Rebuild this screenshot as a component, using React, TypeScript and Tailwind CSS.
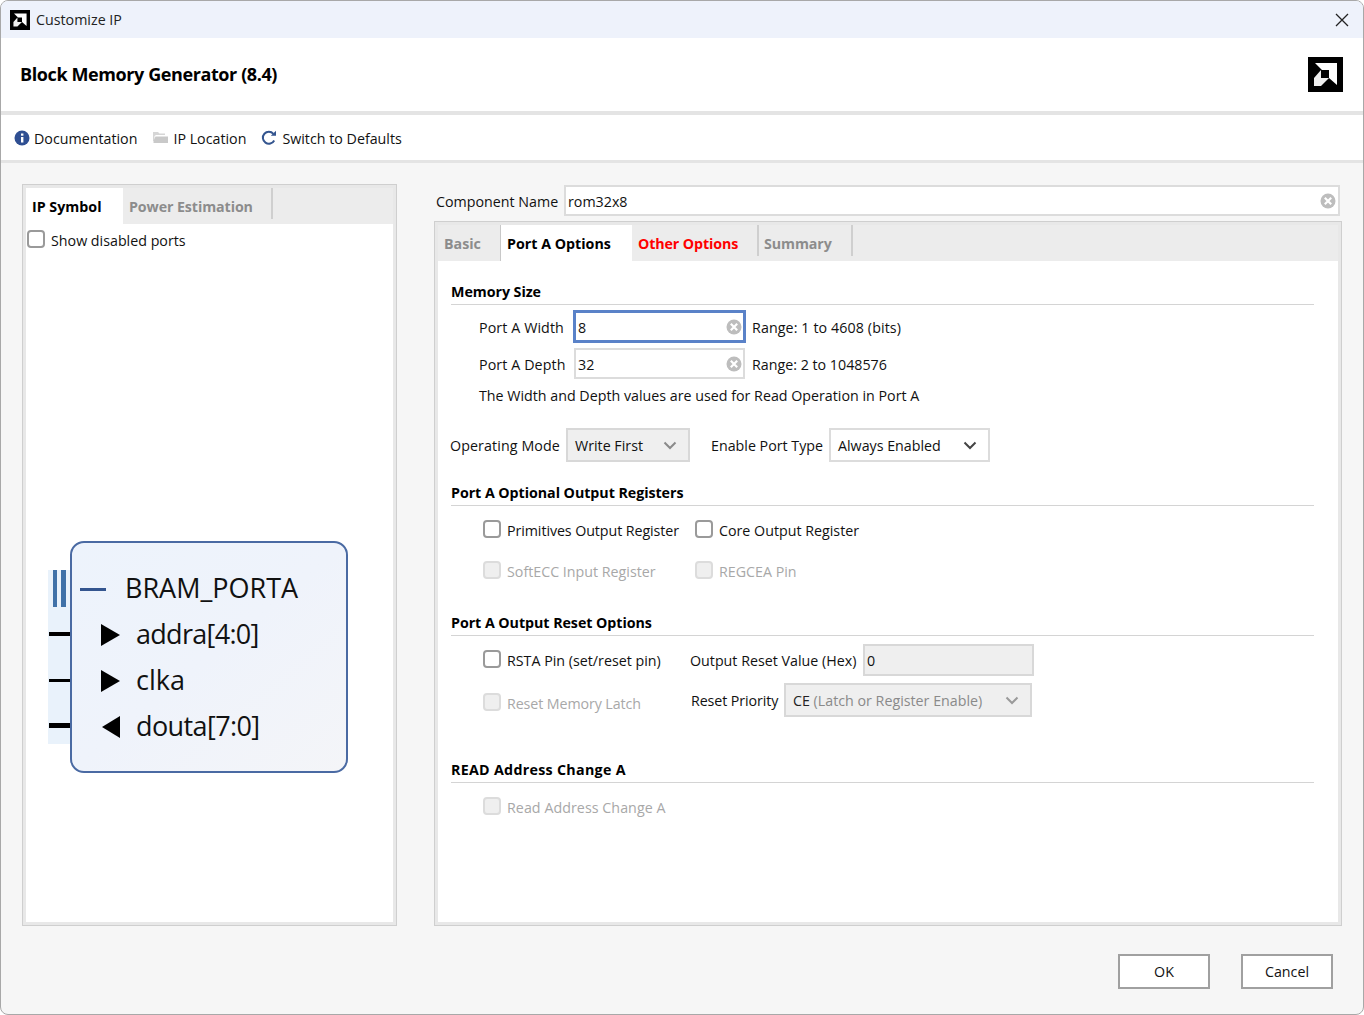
import React from "react";

const Clear = () => (
  <svg width="16" height="16" viewBox="0 0 16 16" className="shrink-0">
    <circle cx="8" cy="8" r="7.5" fill="#bdbdbd" />
    <path d="M4.8 4.8 L11.2 11.2 M11.2 4.8 L4.8 11.2" stroke="#fff" strokeWidth="2.2" />
  </svg>
);

const Chevron = ({ color = "#6e6e6e" }: { color?: string }) => (
  <svg width="14" height="9" viewBox="0 0 14 9" className="shrink-0">
    <path d="M1.5 1.5 L7 7 L12.5 1.5" fill="none" stroke={color} strokeWidth="2" />
  </svg>
);

const Logo = ({ size }: { size: number }) => (
  <svg width={size} height={size} viewBox="0 0 35 35" className="shrink-0">
    <rect width="35" height="35" fill="#000" />
    <path d="M7 6 H29 V28 L21 21 V13 H14 Z" fill="#fff" />
    <path d="M6 29 V21 L13 13 V21 H21 L13 29 Z" fill="#eee" />
  </svg>
);

const Check = ({ disabled = false }: { disabled?: boolean }) => (
  <span
    className={
      disabled
        ? "block w-[18px] h-[18px] shrink-0 rounded-[4px] border-2 border-[#dcdcdc] bg-[#efefef]"
        : "block w-[18px] h-[18px] shrink-0 rounded-[4px] border-2 border-[#9a9a9a] bg-white"
    }
  />
);

const CheckLabel = ({ label, disabled = false, width, track = "" }: { label: string; disabled?: boolean; width: string; track?: string }) => (
  <div className={`flex items-start gap-[6px] ${width}`}>
    <Check disabled={disabled} />
    <span className={`pt-[1px] ${track} ${disabled ? "text-[#a8a8a8]" : "text-[#111]"}`}>{label}</span>
  </div>
);

const Section = ({ title, track = "tracking-[-0.05px]" }: { title: string; track?: string }) => (
  <div className="h-[20px] border-b border-[#d4d4d4] box-content pb-[3px] mr-[24px]">
    <div className={`font-bold text-[#000] leading-[21px] ${track}`}>{title}</div>
  </div>
);

const Sep = () => <div className="w-[2px] h-[31px] self-start bg-[#cfcfcf] shrink-0" />;

const SymRow = ({ dir, label, track }: { dir: "in" | "out"; label: string; track: string }) => (
  <div className="flex items-center h-[46px]">
    <svg width="20" height="22" viewBox="0 0 20 22" className="ml-[29px] shrink-0">
      {dir === "in" ? <path d="M0 0 L19 11 L0 22 Z" fill="#000" /> : <path d="M19 0 V22 L1 11 Z" fill="#000" />}
    </svg>
    <span className={`ml-[15px] pb-[2px] text-[27px] leading-[42px] text-[#111] ${track}`}>{label}</span>
  </div>
);

export default function App() {
  return (
    <div
      className="w-[1364px] h-[1015px] bg-[#f6f6f6] flex flex-col overflow-hidden rounded-[8px] border border-[#a8a8a8] text-[14.25px] leading-[20px] text-[#111]"
      style={{ fontFamily: '"Open Sans", "Noto Sans", sans-serif' }}
    >
      {/* Title bar */}
      <div className="h-[37px] shrink-0 bg-[#eef2fb] flex items-center pl-[9px] pr-[14px]">
        <Logo size={20} />
        <span className="ml-[6px] text-[#222]">Customize IP</span>
        <svg width="14" height="14" viewBox="0 0 14 14" className="ml-auto">
          <path d="M1 1 L13 13 M13 1 L1 13" stroke="#222" strokeWidth="1.3" />
        </svg>
      </div>
      {/* Header */}
      <div className="h-[73px] shrink-0 bg-white flex items-center pl-[19px] pr-[20px]">
        <span className="font-bold text-[18px] leading-[24px] pb-[2px] text-black tracking-[-0.4px]">Block Memory Generator (8.4)</span>
        <div className="ml-auto"><Logo size={35} /></div>
      </div>
      <div className="h-[4px] shrink-0 bg-[#e4e4e4]" />
      {/* Toolbar */}
      <div className="h-[45px] shrink-0 bg-white flex items-center pl-[13px]">
        <svg width="16" height="16" viewBox="0 0 16 16" className="shrink-0">
          <circle cx="8" cy="8" r="7.5" fill="#2f4f92" />
          <rect x="7" y="7" width="2.4" height="5.5" fill="#fff" />
          <rect x="7" y="3.5" width="2.4" height="2.2" fill="#fff" />
        </svg>
        <span className="ml-[4px] pt-[2px]">Documentation</span>
        <svg width="15" height="13" viewBox="0 0 15 13" className="ml-[16px] shrink-0">
          <path d="M0 1 H5 L6.5 2.5 H12 V4 H3 L1.5 5 V10 H0 Z" fill="#d6d6d6" />
          <path d="M2.5 5.5 H15 V12 H0.5 V10 Z" fill="#c9c9c9" />
        </svg>
        <span className="ml-[5px] pt-[2px]">IP Location</span>
        <svg width="16" height="16" viewBox="0 0 16 16" className="ml-[15px] shrink-0">
          <path d="M13.2 10.5 A6 6 0 1 1 12.4 3.8" fill="none" stroke="#34558f" strokeWidth="2" />
          <path d="M9.8 5.8 H15 V0.8 Z" fill="#34558f" />
        </svg>
        <span className="ml-[5px] pt-[2px]">Switch to Defaults</span>
      </div>
      <div className="h-[3px] shrink-0 bg-[#e4e4e4]" />
      {/* Body */}
      <div className="flex-1 flex flex-col min-h-0">
        <div className="flex items-start pt-[21px] pl-[21px]">
          {/* Left panel */}
          <div className="w-[375px] h-[742px] border border-[#cfcfcf]">
            <div className="h-full border-[3px] border-[#e8e8e8] bg-white flex flex-col">
              <div className="h-[36px] shrink-0 bg-[#ececec] flex">
                <div className="w-[97px] bg-white flex items-center pl-[6px] pt-[1px] font-bold text-black">IP Symbol</div>
                <div className="w-[148px] flex items-center pl-[6px] pt-[1px] font-bold text-[#8c8c8c] tracking-[-0.1px]">Power Estimation</div>
                <Sep />
              </div>
              <div className="flex items-start gap-[6px] mt-[6px] pl-[1px] h-[20px]">
                <Check />
                <span className="pt-[1px]">Show disabled ports</span>
              </div>
              {/* IP symbol */}
              <div className="flex mt-[291px] pl-[22px]">
                <div className="w-[23px] mt-[29px] h-[174px] bg-[#e9f2fb] flex flex-col shrink-0">
                  <div className="h-[37px] flex gap-[4px] pl-[5px] shrink-0">
                    <div className="w-[4px] h-[37px] bg-[#3f71a8]" />
                    <div className="w-[5px] h-[37px] bg-[#3f71a8]" />
                  </div>
                  <div className="h-[46px] mt-[4px] flex items-center pl-[1px] shrink-0"><div className="w-full h-[4px] bg-black" /></div>
                  <div className="h-[46px] flex items-center pl-[1px] shrink-0"><div className="w-full h-[3px] bg-black" /></div>
                  <div className="h-[41px] flex items-start pt-[20px] pl-[1px] shrink-0"><div className="w-full h-[5px] bg-black" /></div>
                </div>
                <div className="w-[278px] h-[232px] border-2 border-[#4a6aa3] rounded-[14px] bg-gradient-to-br from-[#edf3fc] via-[#eff3fb] to-[#f4f5f8] pt-[23px] -ml-[1px] shrink-0">
                  <div className="flex items-center h-[46px]">
                    <div className="w-[26px] h-[3px] bg-[#34558f] ml-[8px]" />
                    <span className="ml-[19px] pb-[2px] text-[27px] leading-[42px] text-[#111]">BRAM_PORTA</span>
                  </div>
                  <SymRow dir="in" label="addra[4:0]" track="tracking-[-0.7px]" />
                  <SymRow dir="in" label="clka" track="" />
                  <SymRow dir="out" label="douta[7:0]" track="tracking-[-0.6px]" />
                </div>
              </div>
            </div>
          </div>
          {/* Right */}
          <div className="ml-[37px] w-[908px] flex flex-col">
            <div className="flex items-center h-[31px] mt-[1px] pl-[2px] pr-[2px]">
              <span className="w-[128px] shrink-0 pt-[2px]">Component Name</span>
              <div className="flex-1 h-[31px] border-2 border-[#dcdcdc] bg-white flex items-center pl-[2px] pr-[2px]">
                <span className="pt-[2px]">rom32x8</span>
                <div className="ml-auto flex"><Clear /></div>
              </div>
            </div>
            <div className="mt-[5px] h-[705px] border border-[#cfcfcf]">
              <div className="h-full border-[3px] border-[#e8e8e8] bg-white flex flex-col">
                <div className="h-[36px] shrink-0 bg-[#ececec] flex">
                  <div className="w-[62px] flex items-center pl-[6px] pt-[1px] font-bold text-[#8c8c8c]">Basic</div>
                  <div className="w-[1px] h-[36px] bg-[#c8c8c8] shrink-0" />
                  <div className="w-[131px] bg-white flex items-center pl-[6px] pt-[1px] font-bold text-black">Port A Options</div>
                  <div className="w-[125px] flex items-center pl-[6px] pt-[1px] font-bold text-[#ff0000] tracking-[-0.12px]">Other Options</div>
                  <Sep />
                  <div className="w-[92px] flex items-center pl-[5px] pt-[1px] font-bold text-[#8c8c8c] tracking-[-0.1px]">Summary</div>
                  <Sep />
                </div>
                <div className="pl-[13px] pt-[20px] flex flex-col">
                  <Section title="Memory Size" />
                  <div className="flex items-center h-[33px] mt-[5px] pl-[28px]">
                    <span className="w-[94px] pt-[2px] tracking-[0.1px]">Port A Width</span>
                    <div className="w-[173px] h-[33px] border-[3px] border-[#5a82c8] bg-white flex items-center pl-[2px] pr-[1px]">
                      <span className="pt-[2px]">8</span>
                      <div className="ml-auto flex"><Clear /></div>
                    </div>
                    <span className="ml-[6px] pt-[2px] tracking-[0.1px]">Range: 1 to 4608 (bits)</span>
                  </div>
                  <div className="flex items-center h-[31px] mt-[5px] pl-[28px]">
                    <span className="w-[95px] pt-[2px] tracking-[0.1px]">Port A Depth</span>
                    <div className="w-[171px] h-[31px] border-2 border-[#dcdcdc] bg-white flex items-center pl-[2px] pr-[1px]">
                      <span className="pt-[2px]">32</span>
                      <div className="ml-auto flex"><Clear /></div>
                    </div>
                    <span className="ml-[7px] pt-[2px]">Range: 2 to 1048576</span>
                  </div>
                  <div className="mt-[6px] pl-[28px] h-[20px] leading-[21px]">The Width and Depth values are used for Read Operation in Port A</div>
                  <div className="flex items-center h-[34px] mt-[23px] -ml-[1px]">
                    <span className="w-[116px] shrink-0 pt-[1px] tracking-[0.1px]">Operating Mode</span>
                    <div className="w-[124px] h-[34px] border-2 border-[#d8d8d8] bg-[#efefef] flex items-center pl-[7px] pr-[11px] justify-between">
                      <span className="pt-[1px]">Write First</span>
                      <Chevron color="#8a8a8a" />
                    </div>
                    <span className="ml-[21px] w-[118px] shrink-0 pt-[1px]">Enable Port Type</span>
                    <div className="w-[161px] h-[34px] border-2 border-[#dcdcdc] bg-white flex items-center pl-[7px] pr-[11px] justify-between">
                      <span className="pt-[1px]">Always Enabled</span>
                      <Chevron color="#444" />
                    </div>
                  </div>
                  <div className="mt-[20px]"><Section title="Port A Optional Output Registers" /></div>
                  <div className="flex items-start h-[20px] mt-[14px] pl-[32px]">
                    <CheckLabel label="Primitives Output Register" width="w-[212px]" track="tracking-[-0.08px]" />
                    <CheckLabel label="Core Output Register" width="" />
                  </div>
                  <div className="flex items-start h-[20px] mt-[21px] pl-[32px]">
                    <CheckLabel label="SoftECC Input Register" disabled width="w-[212px]" />
                    <CheckLabel label="REGCEA Pin" disabled width="" />
                  </div>
                  <div className="mt-[31px]"><Section title="Port A Output Reset Options" /></div>
                  <div className="flex items-start h-[32px] mt-[8px] pl-[32px]">
                    <div className="w-[207px] pt-[6px]"><CheckLabel label="RSTA Pin (set/reset pin)" width="" /></div>
                    <span className="w-[173px] shrink-0 pt-[6.5px]">Output Reset Value (Hex)</span>
                    <div className="w-[171px] h-[32px] border-2 border-[#d8d8d8] bg-[#efefef] flex items-center pl-[2px]"><span className="pt-[1px]">0</span></div>
                  </div>
                  <div className="flex items-start h-[34px] mt-[7px] pl-[32px]">
                    <div className="w-[208px] pt-[10px]"><CheckLabel label="Reset Memory Latch" disabled width="" track="tracking-[-0.1px]" /></div>
                    <span className="w-[93px] shrink-0 pt-[8px] tracking-[-0.1px]">Reset Priority</span>
                    <div className="w-[248px] h-[34px] border-2 border-[#d8d8d8] bg-[#efefef] flex items-center pl-[7px] pr-[11px] justify-between">
                      <span className="pt-[2px]"><span className="text-[#222]">CE</span> <span className="text-[#8a8a8a]">(Latch or Register Enable)</span></span>
                      <Chevron color="#9a9a9a" />
                    </div>
                  </div>
                  <div className="mt-[42px]"><Section title="READ Address Change A" track="tracking-[0.3px]" /></div>
                  <div className="flex items-start h-[20px] mt-[14px] pl-[32px]">
                    <CheckLabel label="Read Address Change A" disabled width="" track="tracking-[0.05px]" />
                  </div>
                </div>
              </div>
            </div>
          </div>
        </div>
        {/* Footer */}
        <div className="flex justify-end gap-[31px] pr-[30px] mt-[28px]">
          <button className="w-[92px] h-[35px] border-2 border-[#a0a0a0] bg-white text-[#111] pt-[1px]">OK</button>
          <button className="w-[92px] h-[35px] border-2 border-[#a0a0a0] bg-white text-[#111] pt-[1px]">Cancel</button>
        </div>
      </div>
    </div>
  );
}
